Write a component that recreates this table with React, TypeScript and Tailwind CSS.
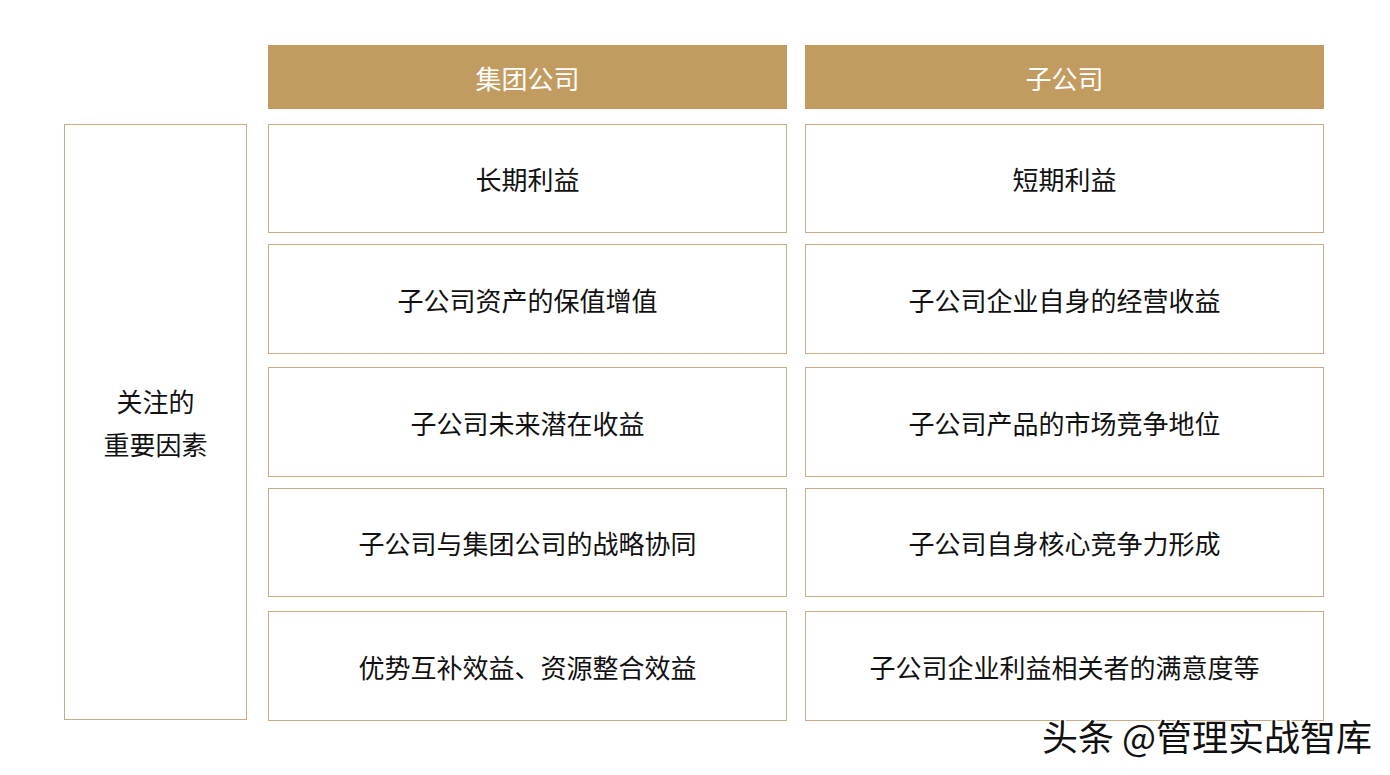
import React from 'react';

const rows: { left: string; right: string; h: string; mt: string }[] = [
  { left: '长期利益', right: '短期利益', h: 'h-[109px]', mt: 'mt-[15px]' },
  { left: '子公司资产的保值增值', right: '子公司企业自身的经营收益', h: 'h-[110px]', mt: 'mt-[11px]' },
  { left: '子公司未来潜在收益', right: '子公司产品的市场竞争地位', h: 'h-[110px]', mt: 'mt-[13px]' },
  { left: '子公司与集团公司的战略协同', right: '子公司自身核心竞争力形成', h: 'h-[109px]', mt: 'mt-[11px]' },
  { left: '优势互补效益、资源整合效益', right: '子公司企业利益相关者的满意度等', h: 'h-[110px]', mt: 'mt-[14px]' },
];

const font = { fontFamily: '"Microsoft YaHei", "Noto Sans CJK SC", sans-serif' };

const Cell: React.FC<{ text: string; className?: string }> = ({ text, className = '' }) => (
  <div
    className={`flex items-center justify-center border border-[#c6ab86] bg-white text-[26px] text-[#111] ${className}`}
  >
    {text}
  </div>
);

const App: React.FC = () => {
  return (
    <div className="relative h-[775px] w-[1390px] overflow-hidden bg-white" style={font}>
      <div className="flex pl-[64px] pt-[45px]">
        {/* left label column */}
        <div className="mt-[79px] mr-[21px] flex h-[596px] w-[183px] flex-col items-center justify-center border border-[#c6ab86] text-[26px] leading-[43px] text-[#111]">
          <span>关注的</span>
          <span>重要因素</span>
        </div>

        <div className="flex flex-col">
          <div className="flex gap-[18px]">
            <div className="flex h-[64px] w-[519px] items-center justify-center bg-[#c29b61] text-[26px] text-white">
              集团公司
            </div>
            <div className="flex h-[64px] w-[519px] items-center justify-center bg-[#c29b61] text-[26px] text-white">
              子公司
            </div>
          </div>

          {rows.map((r, i) => (
            <div key={i} className={`flex gap-[18px] ${r.mt}`}>
              <Cell text={r.left} className={`w-[519px] ${r.h}`} />
              <Cell text={r.right} className={`w-[519px] ${r.h}`} />
            </div>
          ))}
        </div>
      </div>

      {/* watermark */}
      <div
        className="absolute left-[1042px] top-[712px] whitespace-nowrap text-[36px] leading-[46px] text-[#111]"
        style={{ textShadow: '1px 1px 0 #fff, -1px -1px 0 #fff, 2px 0 0 #fff' }}
      >
        头条 @管理实战智库
      </div>
    </div>
  );
};

export default App;
